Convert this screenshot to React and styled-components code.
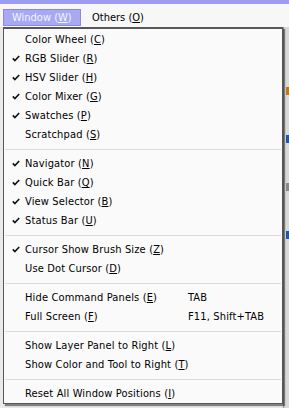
import React from 'react'
import styled, { createGlobalStyle } from 'styled-components'

const GlobalStyle = createGlobalStyle`
  html, body {
    margin: 0;
    padding: 0;
    background: #ececec;
  }
  body {
    font-family: "DejaVu Sans Condensed", "Liberation Sans", sans-serif;
    font-size: 11px;
    color: #000;
  }
`

const menuData = [
  [
    { label: 'Color Wheel', key: 'C' },
    { label: 'RGB Slider', key: 'R', checked: true },
    { label: 'HSV Slider', key: 'H', checked: true },
    { label: 'Color Mixer', key: 'G', checked: true },
    { label: 'Swatches', key: 'P', checked: true },
    { label: 'Scratchpad', key: 'S' },
  ],
  [
    { label: 'Navigator', key: 'N', checked: true },
    { label: 'Quick Bar', key: 'Q', checked: true },
    { label: 'View Selector', key: 'B', checked: true },
    { label: 'Status Bar', key: 'U', checked: true },
  ],
  [
    { label: 'Cursor Show Brush Size', key: 'Z', checked: true },
    { label: 'Use Dot Cursor', key: 'D' },
  ],
  [
    { label: 'Hide Command Panels', key: 'E', shortcut: 'TAB' },
    { label: 'Full Screen', key: 'F', shortcut: 'F11, Shift+TAB' },
  ],
  [
    { label: 'Show Layer Panel to Right', key: 'L' },
    { label: 'Show Color and Tool to Right', key: 'T' },
  ],
  [{ label: 'Reset All Window Positions', key: 'I' }],
]

const Check = () => (
  <svg width='8' height='7' viewBox='0 0 8 7'>
    <path d='M0.8 3.4 L2.9 5.6 L7.2 1' fill='none' stroke='#111' strokeWidth='1.6' />
  </svg>
)

export default function App() {
  return (
    <>
      <GlobalStyle />
      <Screen>
        <TopBand />
        <MenuBar>
          <BarItem active>
            Window (<u>W</u>)
          </BarItem>
          <BarItem>
            Others (<u>O</u>)
          </BarItem>
        </MenuBar>
        <Workspace>
          <SidePanel>
            <PanelMark color='#c0781e' />
            <PanelMark color='#2255aa' />
            <PanelMark color='#888' />
            <PanelMark color='#2255aa' />
          </SidePanel>
          <Dropdown>
            {menuData.map((group, gi) => (
              <React.Fragment key={gi}>
                {gi > 0 && <Separator />}
                {group.map((item) => (
                  <Row key={item.label}>
                    <CheckCell>{item.checked && <Check />}</CheckCell>
                    <Label>
                      {item.label} (<u>{item.key}</u>)
                    </Label>
                    {item.shortcut && <Shortcut>{item.shortcut}</Shortcut>}
                  </Row>
                ))}
              </React.Fragment>
            ))}
          </Dropdown>
        </Workspace>
      </Screen>
    </>
  )
}

const Screen = styled.div`
  width: 289px;
  height: 408px;
  display: flex;
  flex-direction: column;
  overflow: hidden;
`

const TopBand = styled.div`
  height: 4px;
  background: #9c9cf2;
`

const MenuBar = styled.div`
  height: 23px;
  background: #f7f7f7;
  display: flex;
  align-items: flex-start;
  padding: 5px 0 0 3px;
  box-sizing: border-box;
  gap: 2px;
`

const BarItem = styled.div`
  height: 17px;
  box-sizing: border-box;
  display: flex;
  align-items: center;
  padding: 0 8px;
  width: ${(p) => (p.active ? '78px' : 'auto')};
  border: 1px solid ${(p) => (p.active ? '#8a8ae6' : 'transparent')};
  background: ${(p) => (p.active ? '#a9a9f3' : 'transparent')};
  color: ${(p) => (p.active ? '#f4f4ff' : '#000')};
  u {
    text-underline-offset: 1px;
  }
`

const Workspace = styled.div`
  position: relative;
  flex: 1;
  background: #e9e9e9;
  display: flex;
  justify-content: flex-end;
`

const SidePanel = styled.div`
  width: 5px;
  background: #d9d9d9;
  border-left: 1px solid #9a9a9a;
  display: flex;
  flex-direction: column;
  gap: 40px;
  padding-top: 60px;
`

const PanelMark = styled.div`
  height: 8px;
  width: 3px;
  margin-left: 2px;
  background: ${(p) => p.color};
`

const Dropdown = styled.div`
  position: absolute;
  left: 3px;
  top: 0;
  width: 280px;
  box-sizing: border-box;
  background: #fafafa;
  border: 1px solid #575757;
  border-top-width: 2px;
  padding: 1px 1px 0;
  box-shadow: 2px 2px 1px rgba(0, 0, 0, 0.45);
`

const Row = styled.div`
  height: 19px;
  display: flex;
  align-items: center;
  white-space: nowrap;
  letter-spacing: 0.15px;
`

const CheckCell = styled.div`
  width: 20px;
  display: flex;
  justify-content: flex-end;
  padding-right: 5px;
  box-sizing: border-box;
  svg {
    display: block;
  }
`

const Label = styled.span`
  width: 163px;
  u {
    text-underline-offset: 1px;
  }
`

const Shortcut = styled.span``

const Separator = styled.div`
  height: 10px;
  display: flex;
  align-items: center;
  &::before {
    content: '';
    flex: 1;
    height: 1px;
    background: #dcdcdc;
  }
`
